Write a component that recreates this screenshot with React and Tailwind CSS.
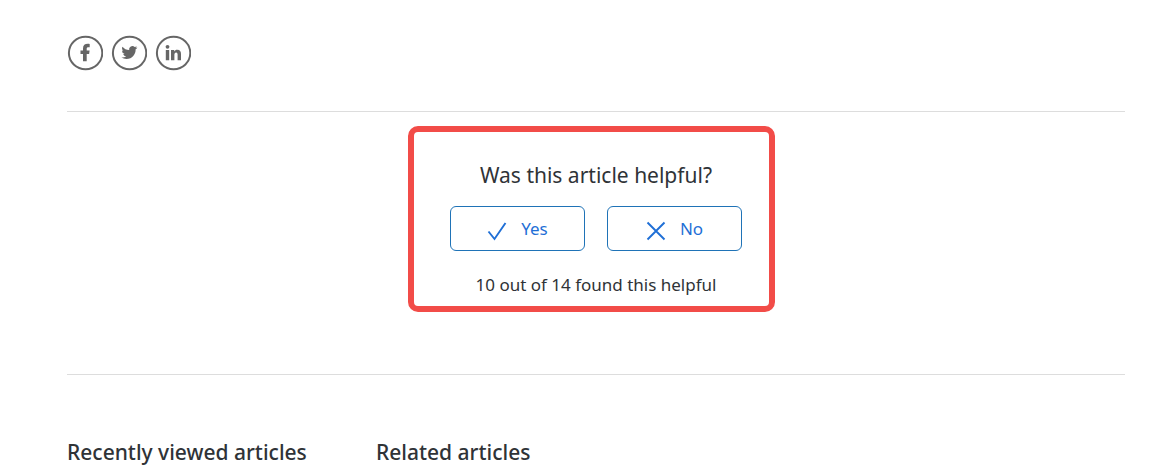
function SocialLink({ label, children }) {
  return (
    <a href="#share" aria-label={label} className="block text-[#666666]">
      <svg className="block size-9" viewBox="0 0 36 36" fill="currentColor" aria-hidden="true">
        <ellipse cx="18.6" cy="18" rx="16.7" ry="16.2" fill="none" stroke="currentColor" strokeWidth="2" />
        {children}
      </svg>
    </a>
  );
}

function VoteButton({ label, path }) {
  return (
    <button
      type="button"
      className="flex h-[45px] w-[135px] items-center justify-center gap-3.5 rounded-md border border-[#1f73b7] text-[17px] text-[#1f6fd6]"
    >
      <svg className="mt-1 size-5" viewBox="0 0 20 20" fill="none" stroke="currentColor" strokeWidth="1.9" aria-hidden="true">
        <path d={path} />
      </svg>
      <span>{label}</span>
    </button>
  );
}

export default function App() {
  return (
    <main className="bg-white pr-[38px] pl-[67px] pt-[35px] font-['Noto_Sans','Open_Sans',sans-serif] text-[#2f3337]">
      <div className="flex gap-2 border-b border-[#dddddd] pb-10">
        <SocialLink label="Facebook">
          <path d="M16 26.200v-7.200h-2.500v-3.500h2.500v-2.100c0-3.300 1.900-4.700 4.800-4.700.9 0 1.500.1 1.900.2v3.300h-1.300c-1.300 0-1.700.5-1.700 1.500v1.800h2.900l-.5 3.500h-2.400v7.200z" />
        </SocialLink>
        <SocialLink label="Twitter">
          <path transform="translate(10.4 9.6) scale(.66)" d="M23.953 4.57a10 10 0 01-2.825.775 4.958 4.958 0 002.163-2.723c-.951.555-2.005.959-3.127 1.184a4.92 4.92 0 00-8.384 4.482C7.69 8.095 4.067 6.13 1.64 3.162a4.822 4.822 0 00-.666 2.475c0 1.71.87 3.213 2.188 4.096a4.904 4.904 0 01-2.228-.616v.06a4.923 4.923 0 003.946 4.827 4.996 4.996 0 01-2.212.085 4.936 4.936 0 004.604 3.417 9.867 9.867 0 01-6.102 2.105c-.39 0-.779-.023-1.17-.067a13.995 13.995 0 007.557 2.209c9.053 0 13.998-7.496 13.998-13.985 0-.21 0-.42-.015-.63A9.935 9.935 0 0024 4.59z" />
        </SocialLink>
        <SocialLink label="LinkedIn">
          <circle cx="12.500" cy="11.800" r="1.900" />
          <path d="M10.800 15h3.400v10.200h-3.400zM16 15h3.200v1.400c.7-1.100 1.700-1.700 3-1.700 2.900 0 3.800 1.800 3.800 4.400v6.100h-3.400v-5.400c0-1.500-.3-2.400-1.500-2.400s-1.700 1-1.700 2.400v5.400H16z" />
        </SocialLink>
      </div>

      <section className="flex justify-center border-b border-[#dddddd] pt-3.5 pb-[62px]">
        <div className="mr-[9px] flex flex-col items-center rounded-[10px] border-[6px] border-[#f24c48] pt-7 pr-[27px] pb-2 pl-9">
          <h2 className="text-[21px] leading-[30px]">Was this article helpful?</h2>
          <div className="mt-4 flex gap-[22px]">
            <VoteButton label="Yes" path="M1.5 10.5l6 7.5L18.5 2" />
            <VoteButton label="No" path="M1.5 1.5l17 17M18.500 1.5l-17 17" />
          </div>
          <p className="mt-5 text-[17px] leading-[27px]">10 out of 14 found this helpful</p>
        </div>
      </section>

      <div className="flex pt-[61px] text-[21px] leading-8 font-medium">
        <h3 className="w-[309px]">Recently viewed articles</h3>
        <h3>Related articles</h3>
      </div>
    </main>
  );
}
